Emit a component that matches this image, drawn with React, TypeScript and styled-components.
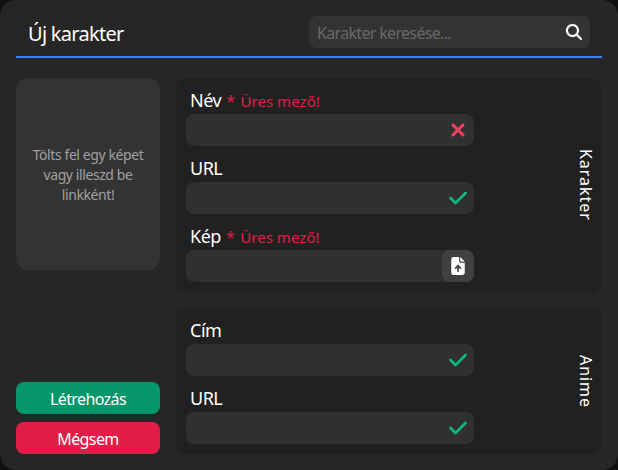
import React from 'react';
import styled, { createGlobalStyle } from 'styled-components';
import { FaCheck, FaFileArrowUp, FaMagnifyingGlass, FaXmark } from 'react-icons/fa6';

const GlobalStyle = createGlobalStyle`
  *, *::before, *::after { box-sizing: border-box; }
  body {
    margin: 0;
    background: #111111;
    color: #ffffff;
    font-family: 'Segoe UI', 'Noto Sans', sans-serif;
  }
  input, button { font: inherit; color: inherit; border: 0; outline: 0; }
  svg { display: block; stroke: currentColor; stroke-width: 5px; stroke-linejoin: round; overflow: visible; }
`;

const Dialog = styled.main`
  display: flex;
  flex-direction: column;
  gap: 20px;
  width: 618px;
  height: 470px;
  padding: 16px;
  border-radius: 16px;
  background: #262626;
`;

const Header = styled.header`
  display: flex;
  justify-content: space-between;
  align-items: flex-start;
  height: 42px;
  padding: 0 12px;
  border-bottom: 2px solid #3b82f6;
`;

const Title = styled.h1`
  margin: 0;
  font-size: 20px;
  line-height: 36px;
  font-weight: 400;
  letter-spacing: -0.72px;
`;

const SearchBox = styled.label`
  display: flex;
  align-items: center;
  width: 281px;
  height: 32px;
  padding: 0 8px;
  border-radius: 8px;
  background: #333333;
`;

const SearchInput = styled.input`
  flex: 1;
  min-width: 0;
  height: 32px;
  padding: 2px 0 0;
  background: transparent;
  font-size: 16px;
  letter-spacing: -0.67px;
  &::placeholder { color: #696969; opacity: 1; }
`;

const Content = styled.div`
  display: flex;
  gap: 16px;
  height: 376px;
`;

const Sidebar = styled.aside`
  display: flex;
  flex-direction: column;
  justify-content: space-between;
  width: 144px;
`;

const ImagePreview = styled.div`
  display: flex;
  align-items: center;
  justify-content: center;
  height: 192px;
  padding: 2px 12px 0;
  border-radius: 12px;
  background: #333333;
  color: #a0a0a0;
  font-size: 14px;
  line-height: 20px;
  letter-spacing: -0.41px;
  text-align: center;
`;

const Actions = styled.div`
  display: flex;
  flex-direction: column;
  gap: 8px;
`;

const ActionButton = styled.button<{ $color: string; $spacing: string }>`
  height: 32px;
  padding: 2px 0 0;
  border-radius: 8px;
  background: ${({ $color }) => $color};
  font-size: 16px;
  line-height: 30px;
  letter-spacing: ${({ $spacing }) => $spacing};
`;

const Sections = styled.div`
  display: flex;
  flex-direction: column;
  flex: 1;
  gap: 16px;
`;

const SectionPanel = styled.section`
  display: flex;
  justify-content: space-between;
  align-items: center;
  padding: 10px 4px 10px 10px;
  border-radius: 12px;
  background: #212121;
`;

const Fields = styled.div`
  display: flex;
  flex-direction: column;
  gap: 10px;
  width: 288px;
`;

const SectionTitle = styled.h2`
  margin: 0;
  writing-mode: vertical-rl;
  width: 24px;
  line-height: 24px;
  font-size: 16px;
  font-weight: 400;
  letter-spacing: 0.95px;
`;

const FieldLabel = styled.div`
  display: flex;
  align-items: baseline;
  height: 26px;
  padding-left: 4px;
  font-size: 18px;
  line-height: 24px;
  letter-spacing: -0.5px;
`;

const Required = styled.span`
  margin-left: 5px;
  color: #e11d48;
  font-size: 16px;
`;

const ErrorText = styled.span`
  margin-left: 6px;
  color: #e11d48;
  font-size: 15px;
  letter-spacing: 0.05px;
`;

const InputBox = styled.div`
  display: flex;
  align-items: center;
  height: 32px;
  border-radius: 8px;
  background: #303030;
`;

const TextInput = styled.input`
  flex: 1;
  min-width: 0;
  height: 32px;
  padding: 0 8px;
  background: transparent;
`;

const Status = styled.span<{ $color: string; $weight: number }>`
  display: grid;
  place-items: center;
  width: 32px;
  height: 32px;
  color: ${({ $color }) => $color};
  svg { stroke-width: ${({ $weight }) => $weight}px; }
`;

const UploadButton = styled.button`
  display: grid;
  place-items: center;
  width: 32px;
  height: 32px;
  padding: 0;
  border-radius: 8px;
  background: #404040;
  svg { stroke: none; }
`;

type Kind = 'valid' | 'invalid' | 'upload';

const Field = ({ label, kind, error }: { label: string; kind: Kind; error?: string }) => (
  <div>
    <FieldLabel>
      {label}
      {error && <Required>*</Required>}
      {error && <ErrorText>{error}</ErrorText>}
    </FieldLabel>
    <InputBox>
      <TextInput aria-label={label} />
      {kind === 'valid' && <Status $color="#10b981" $weight={5}><FaCheck size={20} /></Status>}
      {kind === 'invalid' && <Status $color="#f43f5e" $weight={14}><FaXmark size={20} /></Status>}
      {kind === 'upload' && <UploadButton><FaFileArrowUp size={18} /></UploadButton>}
    </InputBox>
  </div>
);

export default function App() {
  return (
    <>
      <GlobalStyle />
      <Dialog>
        <Header>
          <Title>Új karakter</Title>
          <SearchBox>
            <SearchInput placeholder="Karakter keresése..." />
            <FaMagnifyingGlass size={16} />
          </SearchBox>
        </Header>
        <Content>
          <Sidebar>
            <ImagePreview>Tölts fel egy képet vagy illeszd be linkként!</ImagePreview>
            <Actions>
              <ActionButton $color="#059669" $spacing="-0.6px">Létrehozás</ActionButton>
              <ActionButton $color="#e11d48" $spacing="-0.6px">Mégsem</ActionButton>
            </Actions>
          </Sidebar>
          <Sections>
            <SectionPanel>
              <Fields>
                <Field label="Név" kind="invalid" error="Üres mező!" />
                <Field label="URL" kind="valid" />
                <Field label="Kép" kind="upload" error="Üres mező!" />
              </Fields>
              <SectionTitle>Karakter</SectionTitle>
            </SectionPanel>
            <SectionPanel>
              <Fields>
                <Field label="Cím" kind="valid" />
                <Field label="URL" kind="valid" />
              </Fields>
              <SectionTitle>Anime</SectionTitle>
            </SectionPanel>
          </Sections>
        </Content>
      </Dialog>
    </>
  );
}
